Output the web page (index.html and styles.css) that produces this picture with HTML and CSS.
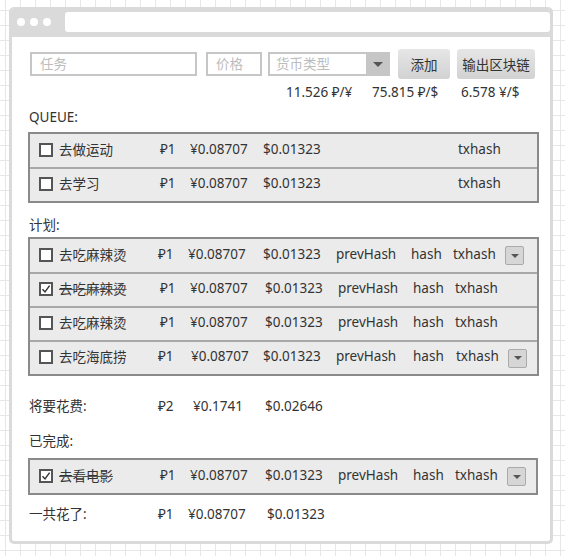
FILE: index.html
```html
<!DOCTYPE html>
<html lang="zh">
<head>
<meta charset="utf-8">
<link rel="stylesheet" href="styles.css">
</head>
<body>
<div class="window">
  <div class="titlebar">
    <div class="dots"><span></span><span></span><span></span></div>
    <div class="address"></div>
  </div>
  <div class="content">
    <div class="form">
      <div class="input task">任务</div>
      <div class="input price">价格</div>
      <div class="select"><span class="ph">货币类型</span><span class="sel-btn"><i class="tri"></i></span></div>
      <button class="btn add">添加</button>
      <button class="btn export">输出区块链</button>
    </div>
    <div class="rates">
      <span class="r1">11.526 ₽/¥</span><span class="r2">75.815 ₽/$</span><span class="r3">6.578 ¥/$</span>
    </div>

    <div class="label l-queue">QUEUE:</div>
    <div class="box queue">
      <div class="row">
        <span class="cb"></span><span class="name">去做运动</span><span class="rub">₽1</span><span class="cny">¥0.08707</span><span class="usd">$0.01323</span><span class="tx">txhash</span>
      </div>
      <div class="row">
        <span class="cb"></span><span class="name">去学习</span><span class="rub">₽1</span><span class="cny">¥0.08707</span><span class="usd">$0.01323</span><span class="tx">txhash</span>
      </div>
    </div>

    <div class="label l-plan">计划:</div>
    <div class="box plan">
      <div class="row">
        <span class="cb"></span><span class="name">去吃麻辣烫</span><span class="rub">₽1</span><span class="cny">¥0.08707</span><span class="usd">$0.01323</span><span class="prev">prevHash</span><span class="hash">hash</span><span class="tx">txhash</span><span class="mini"><i class="tri"></i></span>
      </div>
      <div class="row done">
        <span class="cb checked"><svg viewBox="0 0 10 10" width="10" height="10"><path d="M1.5 5.2 L4 8 L8.6 1.6" fill="none" stroke="#333" stroke-width="1.4"/></svg></span><span class="name">去吃麻辣烫</span><span class="rub">₽1</span><span class="cny">¥0.08707</span><span class="usd">$0.01323</span><span class="prev">prevHash</span><span class="hash">hash</span><span class="tx">txhash</span>
      </div>
      <div class="row">
        <span class="cb"></span><span class="name">去吃麻辣烫</span><span class="rub">₽1</span><span class="cny">¥0.08707</span><span class="usd">$0.01323</span><span class="prev">prevHash</span><span class="hash">hash</span><span class="tx">txhash</span>
      </div>
      <div class="row">
        <span class="cb"></span><span class="name">去吃海底捞</span><span class="rub">₽1</span><span class="cny">¥0.08707</span><span class="usd">$0.01323</span><span class="prev">prevHash</span><span class="hash">hash</span><span class="tx">txhash</span><span class="mini"><i class="tri"></i></span>
      </div>
    </div>

    <div class="sum s-plan">
      <span class="sum-label">将要花费:</span><span class="rub">₽2</span><span class="cny">¥0.1741</span><span class="usd">$0.02646</span>
    </div>

    <div class="label l-done">已完成:</div>
    <div class="box finished">
      <div class="row done">
        <span class="cb checked"><svg viewBox="0 0 10 10" width="10" height="10"><path d="M1.5 5.2 L4 8 L8.6 1.6" fill="none" stroke="#333" stroke-width="1.4"/></svg></span><span class="name">去看电影</span><span class="rub">₽1</span><span class="cny">¥0.08707</span><span class="usd">$0.01323</span><span class="prev">prevHash</span><span class="hash">hash</span><span class="tx">txhash</span><span class="mini"><i class="tri"></i></span>
      </div>
    </div>

    <div class="sum s-done">
      <span class="sum-label">一共花了:</span><span class="rub">₽1</span><span class="cny">¥0.08707</span><span class="usd">$0.01323</span>
    </div>
  </div>
</div>
</body>
</html>
```

FILE: styles.css
```css
html, body {
  margin: 0;
  padding: 0;
}
body {
  width: 565px;
  height: 556px;
  overflow: hidden;
  font-family: "Noto Sans", "Noto Sans CJK SC", sans-serif;
  font-size: 13.5px;
  color: #333;
  background-color: #fff;
  background-image:
    linear-gradient(to right, #e7e7e7 1px, transparent 1px),
    linear-gradient(to bottom, #e7e7e7 1px, transparent 1px);
  background-size: 15px 15px;
  background-position: 5px 10px;
  padding: 7px 0 0 9px;
  box-sizing: border-box;
}
.window {
  width: 544px;
  height: 537px;
  background: #fff;
  border: 3px solid #dadada;
  border-top: none;
  border-radius: 5px;
  box-sizing: border-box;
  overflow: hidden;
}
.titlebar {
  height: 30px;
  background: #dadada;
  display: flex;
  align-items: center;
  padding: 0 3px 0 8px;
  margin: 0 -3px;
}
.dots {
  display: flex;
  gap: 5px;
  width: 48px;
}
.dots span {
  width: 8px;
  height: 8px;
  border-radius: 50%;
  background: #fff;
}
.address {
  flex: 1;
  height: 20px;
  background: #fff;
  border-radius: 3px;
}
.content {
  padding: 12px 0 0 16px;
}
.form {
  display: flex;
  align-items: center;
  height: 30px;
  margin-left: 2px;
}
.input {
  height: 24px;
  border: 2px solid #c6c6c6;
  box-sizing: border-box;
  color: #bdbdbd;
  line-height: 20px;
  padding-left: 8px;
}
.task { width: 167px; }
.price { width: 56px; margin-left: 9px; }
.select {
  width: 122px;
  height: 24px;
  margin-left: 6px;
  border: 2px solid #c6c6c6;
  box-sizing: border-box;
  display: flex;
  color: #bdbdbd;
}
.select .ph {
  flex: 1;
  line-height: 20px;
  padding-left: 6px;
}
.sel-btn {
  width: 24px;
  margin: -2px -2px -2px 0;
  background: #c6c6c6;
  display: flex;
  align-items: center;
  justify-content: center;
}
.tri {
  width: 0;
  height: 0;
  border-left: 5px solid transparent;
  border-right: 5px solid transparent;
  border-top: 5px solid #555;
}
.btn {
  height: 30px;
  border: none;
  border-radius: 3px;
  background: linear-gradient(#e6e6e6, #d2d2d2);
  font-family: inherit;
  font-size: 13.5px;
  color: #333;
  padding: 0;
}
.add { width: 52px; margin-left: 8px; }
.export { width: 78px; margin-left: 7px; }
.rates {
  display: flex;
  height: 22px;
  align-items: center;
  margin-top: 2px;
}
.r1 { margin-left: 258px; width: 86px; }
.r2 { width: 89px; }
.label {
  height: 20px;
  line-height: 20px;
  margin-left: 1px;
}
.l-queue { margin-top: 4px; }
.l-plan { margin-top: 12px; }
.l-done { margin-top: 15px; }
.box {
  border: 2px solid #8a8a8a;
  background: #ebebeb;
  margin-top: 5px;
  width: 511px;
  box-sizing: border-box;
}
.box.plan { margin-top: 2px; }
.box.finished { width: 510px; margin-top: 7px; }
.row {
  display: flex;
  align-items: center;
  height: 33px;
  padding-left: 9px;
  box-sizing: border-box;
  white-space: nowrap;
}
.row + .row { border-top: 2px solid #a8a8a8; height: 34px; }
.row span { flex: none; }
.cb {
  width: 14px;
  height: 14px;
  border: 2px solid #555;
  box-sizing: border-box;
  background: #fff;
  margin-right: 6px;
  display: flex;
  align-items: center;
  justify-content: center;
  position: relative;
  top: -1px;
}
.name { width: 101px; position: relative; top: -2px; }
.rub { width: 30px; }
.cny { width: 75px; }
.usd { width: 73px; }
.prev { width: 75px; }
.hash { width: 42px; }
.tx { width: 52px; }
.row .rub, .row .cny, .row .usd, .row .prev, .row .hash, .row .tx { position: relative; top: -2px; }
.queue .usd { width: 195px; }
.queue .cny { width: 73px; }
.plan .row:first-child .rub, .plan .row:last-child .rub { margin-left: -2px; }
.plan .row:last-child .cny { margin-left: 3px; width: 72px; }
.plan .row:last-child .hash { margin-left: 2px; }
.plan .row:last-child .tx { margin-left: 1px; }
.done .name { text-decoration: line-through; text-decoration-color: #555; }
.mini {
  width: 19px;
  height: 19px;
  border: 1px solid #aaa;
  border-radius: 2px;
  box-sizing: border-box;
  background: #d6d6d6;
  display: flex;
  align-items: center;
  justify-content: center;
}
.mini .tri {
  border-left-width: 4px;
  border-right-width: 4px;
  border-top-width: 4px;
}
.sum {
  display: flex;
  height: 20px;
  line-height: 20px;
  margin-left: 1px;
}
.s-plan { margin-top: 20px; }
.s-done { margin-top: 9px; }
.sum-label { width: 129px; }
.sum .rub { width: 35px; }
.sum .cny { width: 72px; }
.s-done .rub { width: 30px; }
.s-done .cny { width: 79px; }
```
